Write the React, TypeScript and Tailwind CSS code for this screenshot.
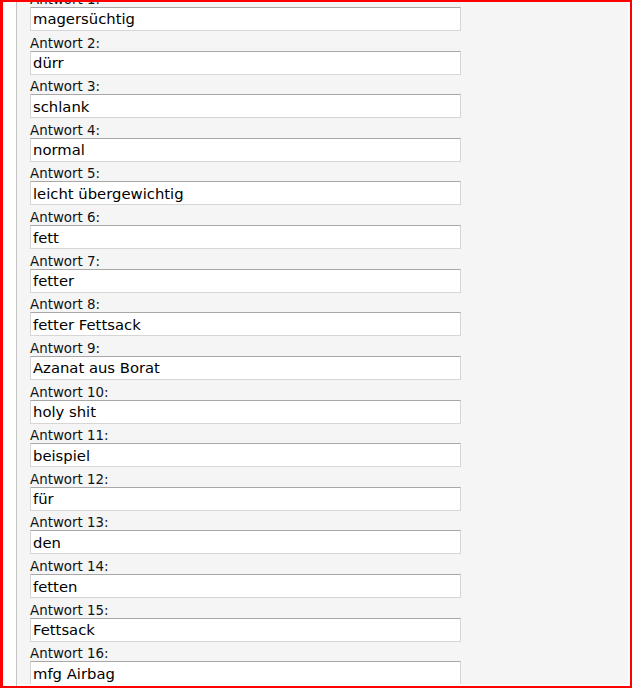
import React from "react";

const answers = [
  "magersüchtig",
  "dürr",
  "schlank",
  "normal",
  "leicht übergewichtig",
  "fett",
  "fetter",
  "fetter Fettsack",
  "Azanat aus Borat",
  "holy shit",
  "beispiel",
  "für",
  "den",
  "fetten",
  "Fettsack",
  "mfg Airbag",
];

export default function App() {
  return (
    <div
      className="w-[632px] h-[688px] overflow-hidden flex border-solid border-[#ff0000] border-l-[3px] border-t-[2px] border-r-[2px] border-b-[2px] bg-white"
      style={{ fontFamily: '"DejaVu Sans", Verdana, sans-serif' }}
    >
      <div className="w-[13px] shrink-0 bg-white" />
      <div className="w-px shrink-0 bg-[#c4c4c4]" />
      <div className="flex-1 overflow-hidden border-r-[2px] border-b-[2px] border-solid border-[#fbfcfd]">
        <div className="h-full bg-[#f5f5f5] overflow-hidden">
          <div className="pl-[13px] mt-[-10.14px]">
            {answers.map((a, i) => (
              <div key={i} className="mb-[4.64px]">
                <div className="text-[13.4px] leading-[15px] text-[#111] whitespace-nowrap">
                  Antwort {i + 1}:
                </div>
                <input
                  readOnly
                  value={a}
                  className="block w-[431px] h-[24px] bg-white text-[14.8px] text-black pl-[2px] outline-none border border-solid border-[#d6d6d6] border-t-[#a8a8a8]"
                  style={{ fontFamily: '"DejaVu Sans", Verdana, sans-serif' }}
                />
              </div>
            ))}
          </div>
        </div>
      </div>
    </div>
  );
}
